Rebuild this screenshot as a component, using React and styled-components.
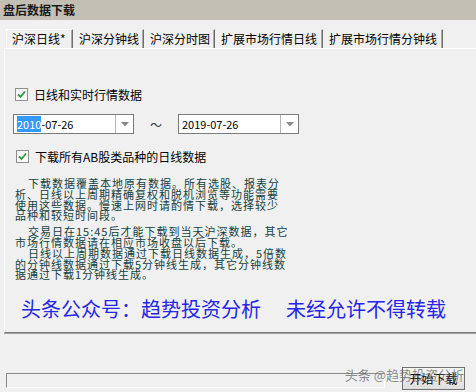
import styled, { createGlobalStyle } from "styled-components";

const GlobalStyle = createGlobalStyle`
  html, body {
    margin: 0;
    padding: 0;
    background: #f0f0f0;
  }
  body {
    width: 476px;
    height: 392px;
    overflow: hidden;
    font-family: "Noto Sans CJK SC", "Noto Sans", sans-serif;
    font-size: 12px;
    color: #000;
  }
`;

const Window = styled.div`
  width: 476px;
  height: 392px;
  display: flex;
  flex-direction: column;
  background: #f0f0f0;
  overflow: hidden;
`;

const TitleBar = styled.div`
  height: 20px;
  line-height: 20px;
  padding-left: 3px;
  background: #c3bfb5;
  color: #1a1a1a;
  font-weight: bold;
  font-size: 12px;
`;

const TabRow = styled.div`
  display: flex;
  margin-top: 9px;
  padding-left: 6px;
  height: 19px;
`;

const Tab = styled.div`
  width: ${(p) => p.$w}px;
  flex: none;
  height: 19px;
  line-height: 18px;
  padding-left: 5px;
  white-space: nowrap;
  box-sizing: border-box;
  border-top: 1px solid ${(p) => (p.$active ? "#ffffff" : "transparent")};
  border-left: 1px solid ${(p) => (p.$active ? "#ffffff" : "transparent")};
  border-right: 1px solid #6e6e6e;
  box-shadow: inset -1px 0 0 #a8a8a8;
  background: #f0f0f0;
`;

const Panel = styled.div`
  margin-left: 4px;
  height: 285px;
  border-top: 1px solid #ffffff;
  border-left: 1px solid #ffffff;
  border-bottom: 1px solid #7a7a7a;
  box-shadow: 0 1px 0 #a0a0a0;
  padding: 39px 0 0 10px;
  box-sizing: border-box;
  display: flex;
  flex-direction: column;
`;

const CheckRow = styled.label`
  display: flex;
  align-items: center;
  height: 13px;
  gap: 6px;
  margin-top: ${(p) => p.$top || 0}px;
  margin-left: ${(p) => p.$left || 0}px;
`;

const Box = styled.span`
  width: 11px;
  height: 11px;
  border: 1px solid #8e8f8f;
  background: linear-gradient(#f4f4f4, #ffffff);
  display: flex;
  align-items: center;
  justify-content: center;
`;

const DateRow = styled.div`
  display: flex;
  align-items: center;
  margin-top: 13px;
  margin-left: -2px;
  gap: 14px;
`;

const Combo = styled.div`
  width: 121px;
  height: 20px;
  box-sizing: border-box;
  border: 1px solid #7a7a7a;
  background: #fff;
  display: flex;
`;

const ComboText = styled.div`
  flex: 1;
  padding-left: 3px;
  line-height: 18px;
  font-size: 11px;
  font-family: "Noto Sans CJK SC", "DejaVu Sans", sans-serif;
`;

const Selected = styled.span`
  background: #3399ff;
  color: #fff;
`;

const DropButton = styled.div`
  width: 17px;
  border-left: 1px solid #b5b5b5;
  display: flex;
  align-items: center;
  justify-content: center;
`;

const Tilde = styled.span`
  font-size: 12px;
  color: #333;
  width: 12px;
  margin: 0 2px;
`;

const Notes = styled.div`
  margin-top: 15px;
  color: #124040;
  font-size: 11px;
  line-height: 10.8px;
  letter-spacing: 1px;
`;

const Para = styled.div`
  margin-bottom: 5px;
`;

const Line = styled.div`
  white-space: nowrap;
  padding-left: ${(p) => (p.$indent ? "13px" : "0")};
`;

const Banner = styled.div`
  margin-top: 12px;
  margin-left: 6px;
  color: #2626e6;
  font-size: 20px;
  line-height: 24px;
  white-space: nowrap;
  display: flex;
  gap: 25px;
`;

const Footer = styled.div`
  position: relative;
  flex: 1;
  display: flex;
  align-items: flex-end;
`;

const Progress = styled.div`
  width: 379px;
  height: 15px;
  margin: 0 0 4px 6px;
  box-sizing: border-box;
  border-top: 1px solid #8a8a8a;
  border-left: 1px solid #8a8a8a;
  border-bottom: 1px solid #ffffff;
  border-right: 1px solid #ffffff;
`;

const StartButton = styled.button`
  width: 63px;
  height: 23px;
  margin: 0 0 2px 17px;
  padding: 0;
  border: 1px solid #707070;
  background: linear-gradient(#f6f6f6, #dedede);
  font-family: "Noto Sans CJK SC", sans-serif;
  font-size: 12px;
  color: #000;
`;

const Watermark = styled.div`
  position: absolute;
  right: 12px;
  bottom: 8px;
  font-size: 13px;
  color: rgba(90, 90, 90, 0.7);
  white-space: nowrap;
  pointer-events: none;
`;

const Check = () => (
  <Box>
    <svg width="9" height="9" viewBox="0 0 9 9">
      <path d="M1 4.5 L3.5 7 L8 1.5" stroke="#2f9a3a" strokeWidth="1.8" fill="none" />
    </svg>
  </Box>
);

const Arrow = () => (
  <svg width="8" height="5" viewBox="0 0 8 5">
    <path d="M0 0 H8 L4 4.5 Z" fill="#8a8a8a" />
  </svg>
);

const tabs = [
  { label: "沪深日线*", w: 67 },
  { label: "沪深分钟线", w: 71 },
  { label: "沪深分时图", w: 71 },
  { label: "扩展市场行情日线", w: 108 },
  { label: "扩展市场行情分钟线", w: 120 },
];

export default function App() {
  return (
    <>
      <GlobalStyle />
      <Window>
        <TitleBar>盘后数据下载</TitleBar>
        <TabRow>
          {tabs.map((t, i) => (
            <Tab key={t.label} $w={t.w} $active={i === 0}>
              {t.label}
            </Tab>
          ))}
        </TabRow>
        <Panel>
          <CheckRow>
            <Check />
            日线和实时行情数据
          </CheckRow>
          <DateRow>
            <Combo>
              <ComboText>
                <Selected>2010</Selected>-07-26
              </ComboText>
              <DropButton>
                <Arrow />
              </DropButton>
            </Combo>
            <Tilde>～</Tilde>
            <Combo>
              <ComboText>2019-07-26</ComboText>
              <DropButton>
                <Arrow />
              </DropButton>
            </Combo>
          </DateRow>
          <CheckRow $top={16} $left={1}>
            <Check />
            下载所有AB股类品种的日线数据
          </CheckRow>
          <Notes>
            <Para>
              <Line $indent>下载数据覆盖本地原有数据。所有选股、报表分</Line>
              <Line>析、日线以上周期精确复权和脱机浏览等功能需要</Line>
              <Line>使用这些数据。慢速上网时请酌情下载，选择较少</Line>
              <Line>品种和较短时间段。</Line>
            </Para>
            <Para>
              <Line $indent>交易日在15:45后才能下载到当天沪深数据，其它</Line>
              <Line>市场行情数据请在相应市场收盘以后下载。</Line>
              <Line $indent>日线以上周期数据通过下载日线数据生成，5倍数</Line>
              <Line>的分钟线数据通过下载5分钟线生成，其它分钟线数</Line>
              <Line>据通过下载1分钟线生成。</Line>
            </Para>
          </Notes>
          <Banner>
            <span>头条公众号：趋势投资分析</span>
            <span>未经允许不得转载</span>
          </Banner>
        </Panel>
        <Footer>
          <Progress />
          <StartButton>开始下载</StartButton>
          <Watermark>头条 @趋势投资分析</Watermark>
        </Footer>
      </Window>
    </>
  );
}
